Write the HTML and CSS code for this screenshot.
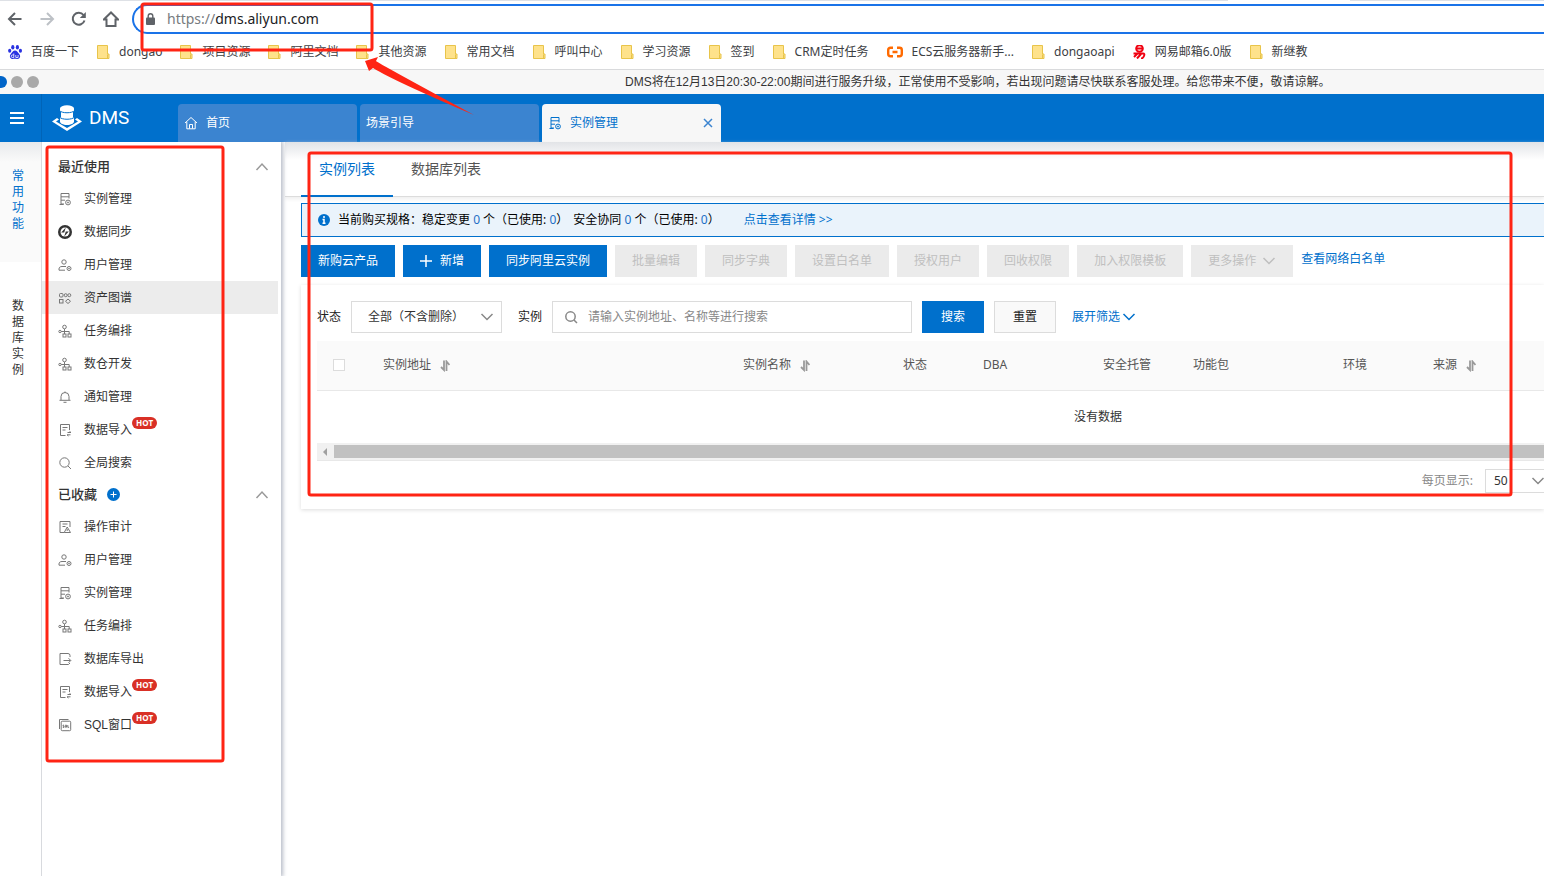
FILE: index.html
```html
<!DOCTYPE html>
<html lang="zh-CN">
<head>
<meta charset="utf-8">
<title>DMS 实例管理</title>
<link rel="stylesheet" href="styles.css">
</head>
<body>
<svg class="sprite" aria-hidden="true">
  <symbol id="i-folder" viewBox="0 0 13 14"><path d="M.5.5h10v8.5h1.5v4.5H.5z" fill="#fee28b" stroke="#e8c44a"/><path d="M10.500 9.500v3.500" stroke="#e8c44a" fill="none"/></symbol>
  <symbol id="i-instance" viewBox="0 0 14 14"><path d="M3 12.500V1.500h8v5M3 4.800h8M3 8.200h4M3 12h3M1.500 12.500h4" /><circle cx="10" cy="10.500" r="2.400"/><circle cx="10" cy="10.500" r=".6"/></symbol>
  <symbol id="i-sync" viewBox="0 0 14 14"><circle cx="7" cy="7" r="7" fill="currentColor" stroke="none"/><circle cx="7" cy="7" r="4.500" fill="#fff" stroke="none"/><path d="M7.800 2.500 3.200 7.600l3-.2zM6.200 11.500l4.600-5.100-3 .2z" fill="currentColor" stroke="none"/></symbol>
  <symbol id="i-user" viewBox="0 0 14 14"><circle cx="6" cy="4" r="2.200"/><path d="M8 8.500H4C2 8.500 1 9.500 1 11v1.200h6"/><circle cx="11" cy="10.500" r="2"/><circle cx="11" cy="10.500" r=".4"/></symbol>
  <symbol id="i-asset" viewBox="0 0 14 14"><rect x="1.500" y="2.500" width="3.500" height="3.500" rx="1"/><rect x="1.500" y="8.500" width="3.500" height="3.500"/><circle cx="7.700" cy="4.200" r="1.500"/><circle cx="11.300" cy="4.200" r="1.500"/><path d="m10 8 2.500 2.300L10 12.500l-2.500-2.200z"/></symbol>
  <symbol id="i-flow" viewBox="0 0 14 14"><circle cx="6.500" cy="3" r="1.800"/><circle cx="2" cy="7.500" r="1.200"/><path d="M6.500 5v4M3.200 7.500h8V10M6.500 9v1"/><rect x="5" y="10" width="3" height="3"/><rect x="10" y="10" width="3" height="3"/></symbol>
  <symbol id="i-bell" viewBox="0 0 14 14"><path d="M3 10V6.500a4 4 0 0 1 8 0V10M1.500 10.300h11M5.500 12.300h3M7 1.500v1"/></symbol>
  <symbol id="i-import" viewBox="0 0 14 14"><path d="M7.500 12.500h-5v-11h9V7M4.500 4.500h5M4.500 7h3M13 9.500H9.500M9 11.800h3.500M11.500 8.300 13 9.500M10.500 13 9 11.800"/></symbol>
  <symbol id="i-search" viewBox="0 0 14 14"><circle cx="6.500" cy="6.500" r="4.700"/><path d="m10 10 3 3"/></symbol>
  <symbol id="i-audit" viewBox="0 0 14 14"><path d="M6 12.500H2v-11h10V7M4.500 4h5M4.500 6.500h3M9.200 7l3.300 5.500H6.200zM9.200 9v2"/></symbol>
  <symbol id="i-export" viewBox="0 0 14 14"><path d="M12 5V3.500a2 2 0 0 0-2-2H2v11h8.500L12 11M5.500 8.500h7M10.500 6.200l2.300 2.300-2.300 2.300"/></symbol>
  <symbol id="i-sql" viewBox="0 0 14 14"><path d="M1.500 11V1.500h9"/><rect x="3.200" y="3.200" width="9.500" height="9.500" rx="1"/><path d="M6 7.200H5v1h1v1.200H4.800M7.300 7.200h1.200v2H7.300zM9.800 7v2.300h1.300"/></symbol>
  <symbol id="i-up" viewBox="0 0 14 14"><path d="m1.500 10 5.500-6 5.500 6" stroke-width="1.500"/></symbol>
  <symbol id="i-down" viewBox="0 0 14 14"><path d="m1.500 4 5.500 5.500 5.500-5.500" stroke-width="1.500"/></symbol>
  <symbol id="i-sort" viewBox="0 0 10 12"><path d="M4 .5V10L1 7M6.500 11V1.500L9.500 5" stroke-width="1.800"/></symbol>
  <symbol id="i-home" viewBox="0 0 14 14"><path d="M1 7 7 1.500 13 7M2.800 5.800v7h8.400v-7M5.500 12.500V8.500h3v4"/></symbol>
</svg>

<header class="browser">
  <div class="tabstrip"></div>
  <div class="toolbar">
    <button class="tool" aria-label="后退"><svg viewBox="0 0 16 16"><path d="M14.500 8H2M8 2 2 8l6 6"/></svg></button>
    <button class="tool tool-off" aria-label="前进"><svg viewBox="0 0 16 16"><path d="M1.500 8H14M8 2l6 6-6 6"/></svg></button>
    <button class="tool" aria-label="刷新"><svg viewBox="0 0 16 16"><path d="M13.500 9.500A6 6 0 1 1 12.500 4"/><path d="M14.800 1v6H8.800z" fill="currentColor" stroke="none"/></svg></button>
    <button class="tool" aria-label="主页"><svg viewBox="0 0 16 16"><path d="M.8 8.500 8 1.500l7.200 7H12.500V15h-9V8.500z"/></svg></button>
    <div class="address">
      <svg class="lock" viewBox="0 0 9 12"><rect y="4.500" width="9" height="7.500" rx="1" fill="#5f6368"/><path d="M2.200 5V3a2.300 2.300 0 0 1 4.600 0v2" fill="none" stroke="#5f6368" stroke-width="1.400"/></svg>
      <span class="url"><span class="scheme">https://</span>dms.aliyun.com</span>
    </div>
  </div>
  <nav class="bookmarks">
    <a href="#"><svg class="bm-baidu" viewBox="0 0 14 14" fill="#2932e1"><ellipse cx="4.800" cy="2.300" rx="1.600" ry="2.200"/><ellipse cx="9.400" cy="2.300" rx="1.600" ry="2.200"/><ellipse cx="1.700" cy="5.800" rx="1.600" ry="2"/><ellipse cx="12.400" cy="5.800" rx="1.600" ry="2"/><path d="M7 5.500c2 0 2.500 1.800 4 3.200 2.500 2.500.5 5.300-1.800 5.200-1.600 0-2.800-.3-4.400 0C2 14.200.8 11 3 8.700 4.500 7.300 5 5.500 7 5.500z"/><path d="M5.800 8.500v4H4.500a1.200 1.200 0 0 1 0-2.500h1.300M7.800 10v2.500h2.300V10" fill="none" stroke="#fff" stroke-width=".8"/></svg>百度一下</a>
    <a href="#"><svg><use href="#i-folder"/></svg>dongao</a>
    <a href="#"><svg><use href="#i-folder"/></svg>项目资源</a>
    <a href="#"><svg><use href="#i-folder"/></svg>阿里文档</a>
    <a href="#"><svg><use href="#i-folder"/></svg>其他资源</a>
    <a href="#"><svg><use href="#i-folder"/></svg>常用文档</a>
    <a href="#"><svg><use href="#i-folder"/></svg>呼叫中心</a>
    <a href="#"><svg><use href="#i-folder"/></svg>学习资源</a>
    <a href="#"><svg><use href="#i-folder"/></svg>签到</a>
    <a href="#"><svg><use href="#i-folder"/></svg>CRM定时任务</a>
    <a href="#"><svg class="bm-wide" viewBox="0 0 16 14" fill="none" stroke="#ff6a00" stroke-width="2.400"><path d="M6 2.800H3.500Q1.200 2.800 1.200 5v4q0 2.200 2.300 2.200H6M10 2.800h2.500q2.300 0 2.300 2.200v4q0 2.200-2.300 2.200H10M5.500 7h5"/></svg>ECS云服务器新手...</a>
    <a href="#"><svg><use href="#i-folder"/></svg>dongaoapi</a>
    <a href="#"><svg viewBox="0 0 12 14" fill="none" stroke="#f00010" stroke-width="2"><circle cx="6" cy="3.500" r="3.300"/><path d="M3.500 3.500h5M0 8.500h9.500q2 0 1 2.500T7.500 13.500M4.500 8 .5 12M7.500 9l-4 4.500"/></svg>网易邮箱6.0版</a>
    <a href="#"><svg><use href="#i-folder"/></svg>新继教</a>
  </nav>
</header>

<div class="notice">
  <div class="dots"><i class="dot dot-on"></i><i class="dot"></i><i class="dot"></i></div>
  <p>DMS将在12月13日20:30-22:00期间进行服务升级，正常使用不受影响，若出现问题请尽快联系客服处理。给您带来不便，敬请谅解。</p>
</div>

<div class="topbar">
  <button class="menu" aria-label="菜单"><svg viewBox="0 0 14 12"><path d="M0 1h14M0 6h14M0 11h14"/></svg></button>
  <div class="brand">
    <svg viewBox="0 0 30 26"><path d="M5 13 0 16.500 15 26l15-9.500L25 13l-2 1.500 3 2-11 6.500-11-6.500 3-2z" fill="#fff"/><path d="M8 3.500v13c0 1.800 3 3.500 7 3.500s7-1.700 7-3.500v-13z" fill="#fff"/><ellipse cx="15" cy="3.500" rx="7" ry="3.200" fill="#fff"/><path d="M7.500 5.500c2 3 13 3 15 0M7.500 12c2 3 13 3 15 0M8.500 6.500v6M21.500 6.500v6" fill="none" stroke="#0070cc" stroke-width="1"/></svg>
    <span>DMS</span>
  </div>
  <nav class="worktabs">
    <a href="#" class="worktab"><svg class="icon"><use href="#i-home"/></svg>首页</a>
    <a href="#" class="worktab">场景引导</a>
    <div class="worktab worktab-on"><svg class="icon"><use href="#i-instance"/></svg><a href="#">实例管理</a><button class="close" aria-label="关闭"><svg viewBox="0 0 10 10"><path d="m1 1 8 8M9 1 1 9"/></svg></button></div>
  </nav>
</div>

<div class="workspace">
  <nav class="rail">
    <a href="#" class="rail-item rail-on"><span>常用功能</span></a>
    <a href="#" class="rail-item"><span>数据库实例</span></a>
  </nav>

  <aside class="side">
    <h2 class="side-head">最近使用<button class="fold" aria-label="收起最近使用"><svg class="icon"><use href="#i-up"/></svg></button></h2>
    <ul>
      <li><a href="#"><svg class="icon"><use href="#i-instance"/></svg>实例管理</a></li>
      <li><a href="#"><svg class="icon icon-dark"><use href="#i-sync"/></svg>数据同步</a></li>
      <li><a href="#"><svg class="icon"><use href="#i-user"/></svg>用户管理</a></li>
      <li><a href="#" class="hover"><svg class="icon"><use href="#i-asset"/></svg>资产图谱</a></li>
      <li><a href="#"><svg class="icon"><use href="#i-flow"/></svg>任务编排</a></li>
      <li><a href="#"><svg class="icon"><use href="#i-flow"/></svg>数仓开发</a></li>
      <li><a href="#"><svg class="icon"><use href="#i-bell"/></svg>通知管理</a></li>
      <li><a href="#"><svg class="icon"><use href="#i-import"/></svg>数据导入<b class="hot">HOT</b></a></li>
      <li><a href="#"><svg class="icon"><use href="#i-search"/></svg>全局搜索</a></li>
    </ul>
    <h2 class="side-head">已收藏<button class="plus" aria-label="添加收藏"><svg viewBox="0 0 13 13"><path d="M6.500 3.500v6M3.500 6.500h6"/></svg></button><button class="fold" aria-label="收起已收藏"><svg class="icon"><use href="#i-up"/></svg></button></h2>
    <ul>
      <li><a href="#"><svg class="icon"><use href="#i-audit"/></svg>操作审计</a></li>
      <li><a href="#"><svg class="icon"><use href="#i-user"/></svg>用户管理</a></li>
      <li><a href="#"><svg class="icon"><use href="#i-instance"/></svg>实例管理</a></li>
      <li><a href="#"><svg class="icon"><use href="#i-flow"/></svg>任务编排</a></li>
      <li><a href="#"><svg class="icon"><use href="#i-export"/></svg>数据库导出</a></li>
      <li><a href="#"><svg class="icon"><use href="#i-import"/></svg>数据导入<b class="hot">HOT</b></a></li>
      <li><a href="#"><svg class="icon"><use href="#i-sql"/></svg>SQL窗口<b class="hot">HOT</b></a></li>
    </ul>
  </aside>

  <main class="main">
    <nav class="tabs">
      <a href="#" class="tab tab-on">实例列表</a>
      <a href="#" class="tab">数据库列表</a>
    </nav>
    <div class="content">
      <div class="info">
        <svg class="info-icon" viewBox="0 0 12 12"><circle cx="6" cy="6" r="6" fill="#0070cc"/><path d="M6 2v2M4.500 5.500H6V9M4.500 9.200h3" stroke="#fff" stroke-width="1.500" fill="none"/></svg>
        <span>当前购买规格：稳定变更 <em>0</em> 个（已使用: <em>0</em>）</span>
        <span>安全协同 <em>0</em> 个（已使用: <em>0</em>）</span>
        <a href="#" class="info-link">点击查看详情 &gt;&gt;</a>
      </div>

      <div class="actions">
        <button class="btn btn-primary">新购云产品</button>
        <button class="btn btn-primary"><svg class="add" viewBox="0 0 12 12"><path d="M6 0v12M0 6h12"/></svg>新增</button>
        <button class="btn btn-primary">同步阿里云实例</button>
        <button class="btn" disabled>批量编辑</button>
        <button class="btn" disabled>同步字典</button>
        <button class="btn" disabled>设置白名单</button>
        <button class="btn" disabled>授权用户</button>
        <button class="btn" disabled>回收权限</button>
        <button class="btn" disabled>加入权限模板</button>
        <button class="btn" disabled>更多操作<svg class="icon more"><use href="#i-down"/></svg></button>
        <a href="#">查看网络白名单</a>
      </div>

      <section class="card">
        <form class="filters">
          <label for="state">状态</label>
          <span class="select"><select id="state"><option>全部（不含删除）</option></select><svg class="icon"><use href="#i-down"/></svg></span>
          <label for="keyword">实例</label>
          <span class="search"><svg class="icon"><use href="#i-search"/></svg><input id="keyword" type="text" placeholder="请输入实例地址、名称等进行搜索"></span>
          <button type="button" class="btn btn-primary btn-form">搜索</button>
          <button type="button" class="btn btn-plain btn-form">重置</button>
          <a href="#" class="expand">展开筛选<svg class="icon"><use href="#i-down"/></svg></a>
        </form>
        <div class="table-view">
          <table>
            <colgroup><col class="w-check"><col class="w-addr"><col class="w-name"><col class="w-80"><col class="w-120"><col class="w-90"><col class="w-150"><col class="w-90"><col class="w-rest"></colgroup>
            <thead><tr>
              <th class="check"><input type="checkbox" aria-label="全选"></th>
              <th>实例地址<svg class="sort"><use href="#i-sort"/></svg></th>
              <th>实例名称<svg class="sort"><use href="#i-sort"/></svg></th>
              <th>状态</th><th>DBA</th><th>安全托管</th><th>功能包</th><th>环境</th>
              <th>来源<svg class="sort"><use href="#i-sort"/></svg></th>
            </tr></thead>
            <tbody><tr><td colspan="9">没有数据</td></tr></tbody>
          </table>
        </div>
        <div class="scroll"><i class="scroll-left"></i><i class="scroll-thumb"></i></div>
        <div class="pager">
          <label for="size">每页显示:</label>
          <span class="select select-size"><select id="size"><option>50</option></select><svg class="icon"><use href="#i-down"/></svg></span>
        </div>
      </section>
    </div>
  </main>
</div>

<svg class="marks" aria-hidden="true">
  <rect x="142" y="4" width="230" height="46" rx="2"/>
  <rect x="47" y="147" width="176" height="614" rx="2"/>
  <rect x="309" y="153" width="1202" height="342" rx="2"/>
  <path d="m365 61 13-4-2 4q2 2 98 54-80-34-101-47l-4 3z"/>
</svg>
</body>
</html>
```

FILE: styles.css
```css
* { box-sizing: border-box; }

body {
  margin: 0;
  height: 100vh;
  display: flex;
  flex-direction: column;
  position: relative;
  overflow: hidden;
  background: #fff;
  color: #333;
  font: 12px/16px "Liberation Sans", "Noto Sans CJK SC", sans-serif;
}

a { color: #0070cc; text-decoration: none; }
ul, p, h2 { margin: 0; padding: 0; }
ul { list-style: none; }
em { font-style: normal; color: #1f6fc5; }
svg { display: block; flex: none; }
button, input, select { font: inherit; }
button { border: 0; padding: 0; background: none; color: inherit; }

.sprite { position: absolute; width: 0; height: 0; }
.icon {
  width: 14px;
  height: 14px;
  fill: none;
  stroke: currentColor;
}

/* Browser chrome */
.browser {
  flex: none;
  height: 70px;
  border-bottom: 1px solid #d9dadc;
  background: #fff;
  font-family: "Noto Sans", "Noto Sans CJK SC", sans-serif;
}
.tabstrip {
  height: 1px;
  background: linear-gradient(90deg, #dee1e6 1228px, #fff 1228px 1350px, #dee1e6 1350px);
}
.toolbar {
  display: flex;
  align-items: center;
  gap: 16px;
  padding: 3px 0 0 7px;
}
.tool { color: #5f6368; }
.tool svg {
  width: 16px;
  height: 16px;
  fill: none;
  stroke: currentColor;
  stroke-width: 2;
}
.tool-off { color: #bdc1c6; }
.address {
  flex: 1;
  display: flex;
  align-items: center;
  gap: 12px;
  height: 30px;
  margin-left: -3px;
  padding-left: 12px;
  border: 2px solid #1a73e8;
  border-right: 0;
  border-radius: 15px 0 0 15px;
}
.lock { width: 9px; height: 12px; }
.url { font-size: 14px; line-height: 20px; color: #202124; }
.scheme { color: #777b80; }

.bookmarks {
  display: flex;
  align-items: center;
  gap: 18px;
  height: 35px;
  padding-left: 8px;
}
.bookmarks a {
  display: flex;
  align-items: center;
  gap: 9px;
  color: #3c4043;
  white-space: nowrap;
}
.bookmarks svg { width: 13px; height: 14px; }
.bookmarks .bm-baidu { width: 14px; }
.bookmarks .bm-wide { width: 16px; }

.notice {
  flex: none;
  display: flex;
  align-items: center;
  height: 24px;
  background: #f7f7f7;
  overflow: hidden;
  white-space: nowrap;
}
.dots { display: flex; gap: 4px; width: 625px; margin-left: -5px; }
.notice p { margin-left: 5px; }
.dot { width: 12px; height: 12px; border-radius: 50%; background: #a9a9a9; }
.dot-on { background: #0064c8; }

/* Product header */
.topbar {
  flex: none;
  display: flex;
  height: 48px;
  background: #0070cc;
  color: #fff;
}
.menu {
  display: flex;
  align-items: center;
  width: 42px;
  padding-left: 10px;
  border-right: 1px solid #0064b8;
}
.menu svg { width: 14px; height: 12px; stroke: #fff; stroke-width: 2; }
.brand {
  display: flex;
  align-items: center;
  gap: 7px;
  width: 136px;
  padding-left: 10px;
  font-family: Roboto, sans-serif;
  font-size: 19px;
}
.brand svg { width: 30px; height: 26px; }
.worktabs { display: flex; align-items: flex-end; gap: 3px; }
.worktab {
  display: flex;
  align-items: center;
  gap: 8px;
  width: 179px;
  height: 38px;
  padding: 0 8px 0 6px;
  border-radius: 4px 4px 0 0;
  background: #3b84d0;
  color: #fff;
}
.worktab-on { background: #f7f7f7; color: #0070cc; }
.close { margin-left: auto; }
.close svg { width: 10px; height: 10px; stroke: #3b84d0; stroke-width: 1.500; }

/* Navigation columns */
.workspace { flex: 1; display: flex; min-height: 0; }
.rail {
  flex: none;
  width: 42px;
  border-right: 1px solid #d8dade;
}
.rail-item { display: block; padding: 36px 12px; color: #333; }
.rail-item span { display: block; width: 12px; word-break: break-all; }
.rail-on {
  height: 120px;
  padding-top: 26px;
  background: linear-gradient(#e8eaec, #fafafa 20px);
  color: #0070cc;
}
.side {
  flex: none;
  width: 239px;
  padding-top: 9px;
  position: relative;
  box-shadow: 1px 0 4px 1px #b8bdc8;
  clip-path: inset(0 -8px 0 0);
  background: #fff;
}
.side-head {
  display: flex;
  align-items: center;
  height: 31px;
  padding: 0 12px 0 16px;
  font-size: 13px;
  font-weight: 500;
}
.fold { margin-left: auto; color: #999; }
.plus { margin-left: 10px; border-radius: 50%; background: #0070cc; }
.plus svg { width: 13px; height: 13px; stroke: #fff; }
.side li a {
  display: flex;
  align-items: center;
  height: 33px;
  margin-right: 3px;
  padding-left: 16px;
  color: #333;
}
.side li .icon { margin-right: 12px; color: #777; }
.side li .icon-dark { color: #333; }
.side .hover { background: #ececec; }
.hot {
  margin-bottom: 14px;
  padding: 0 4px;
  border-radius: 6px;
  background: #d93026;
  color: #fff;
  font: bold 8px/12px "Open Sans", sans-serif;
}

/* Main panel */
.main {
  flex: 1;
  min-width: 0;
  margin-left: 4px;
  background: linear-gradient(#e2e4e7, #fff 18px);
  font-family: "Noto Sans", "Noto Sans CJK SC", sans-serif;
}
.tabs {
  display: flex;
  height: 55px;
  padding-left: 16px;
  border-bottom: 1px solid #dcdcdc;
  box-shadow: 0 2px 4px #eee;
}
.tab {
  padding: 17px 18px;
  color: #555;
  font-size: 14px;
  line-height: 20px;
}
.tab-on { color: #0070cc; border-bottom: 2px solid #0070cc; margin-bottom: -1px; }
.content { padding: 6px 0 0 16px; }
.info {
  display: flex;
  align-items: center;
  height: 34px;
  padding-left: 16px;
  border: 1px solid #0070cc;
  border-right: 0;
  background: #eaf3fb;
  color: #000;
  white-space: nowrap;
}
.info-icon { width: 12px; height: 12px; margin-right: 8px; }
.info span + span { margin-left: 5px; }
.info-link { margin-left: 24px; }
.actions {
  display: flex;
  gap: 8px;
  margin: 8px 0;
  line-height: 28px;
  white-space: nowrap;
}
.btn {
  display: flex;
  align-items: center;
  justify-content: center;
  height: 32px;
  padding: 0 17px;
  background: #ebebeb;
  color: #bfbfbf;
}
.btn-primary { background: #0070cc; color: #fff; }
.btn-plain { border: 1px solid #dcdcdc; background: #f9f9f9; color: #222; }
.btn-form { width: 62px; padding: 0; }
.add { width: 12px; height: 12px; margin-right: 8px; stroke: #fff; stroke-width: 1.500; }
.more { margin-left: 6px; }

.card {
  height: 224px;
  padding: 16px 0 0 16px;
  box-shadow: 0 1px 4px #ddd;
}
.filters { display: flex; align-items: center; gap: 10px; color: #222; white-space: nowrap; }
.select { position: relative; width: 151px; margin-right: 6px; }
.select select {
  display: block;
  width: 100%;
  height: 32px;
  padding: 0 16px;
  appearance: none;
  border: 1px solid #dcdcdc;
  border-radius: 0;
  background: #fff;
  color: #333;
}
.select .icon { position: absolute; right: 8px; top: 9px; color: #888; pointer-events: none; }
.search {
  display: flex;
  align-items: center;
  gap: 10px;
  width: 360px;
  height: 32px;
  padding: 0 11px;
  border: 1px solid #dcdcdc;
}
.search .icon { color: #888; stroke-width: 1.500; }
.search input { flex: 1; padding: 0; border: 0; outline: 0; }
.search input::placeholder { color: #888; }
.expand { display: flex; align-items: center; gap: 2px; margin-left: 6px; }

.table-view { margin-top: 8px; overflow: hidden; }
table { width: 1562px; table-layout: fixed; border-collapse: collapse; }
th {
  height: 49px;
  padding: 0 16px;
  border-bottom: 1px solid #e8e8e8;
  background: #fafafa;
  color: #555;
  font-weight: 400;
  text-align: left;
}
td { height: 53px; padding: 0; text-align: center; }
.w-check { width: 50px; }
.w-addr { width: 360px; }
.w-name { width: 160px; }
.w-80 { width: 80px; }
.w-120 { width: 120px; }
.w-90 { width: 90px; }
.w-150 { width: 150px; }
.w-rest { width: 462px; }
.check input {
  display: block;
  width: 12px;
  height: 12px;
  margin: 0;
  appearance: none;
  border: 1px solid #dcdcdc;
  background: #fff;
}
.sort {
  display: inline-block;
  width: 10px;
  height: 12px;
  margin-left: 9px;
  vertical-align: middle;
  fill: none;
  stroke: #999;
}
.scroll {
  display: flex;
  align-items: center;
  height: 18px;
  padding-left: 6px;
  border-bottom: 1px solid #e8e8e8;
  background: #f1f1f1;
}
.scroll-left {
  margin-right: 7px;
  border: 4px solid transparent;
  border-left-width: 0;
  border-right-color: #a0a0a0;
}
.scroll-thumb { flex: 1; height: 13px; background: #c1c1c1; }
.pager {
  display: flex;
  align-items: center;
  justify-content: flex-end;
  gap: 12px;
  margin-top: 8px;
  color: #888;
}
.select-size { width: 59px; margin-right: 0; }
.select-size select { height: 24px; padding: 0 8px; border-right: 0; }
.select-size .icon { right: -1px; top: 5px; }

/* Red highlight frames and arrow */
.marks { position: absolute; inset: 0; width: 100%; height: 100%; pointer-events: none; }
.marks rect { fill: none; stroke: #ff2414; stroke-width: 3; }
.marks path { fill: #ff2414; }
```
